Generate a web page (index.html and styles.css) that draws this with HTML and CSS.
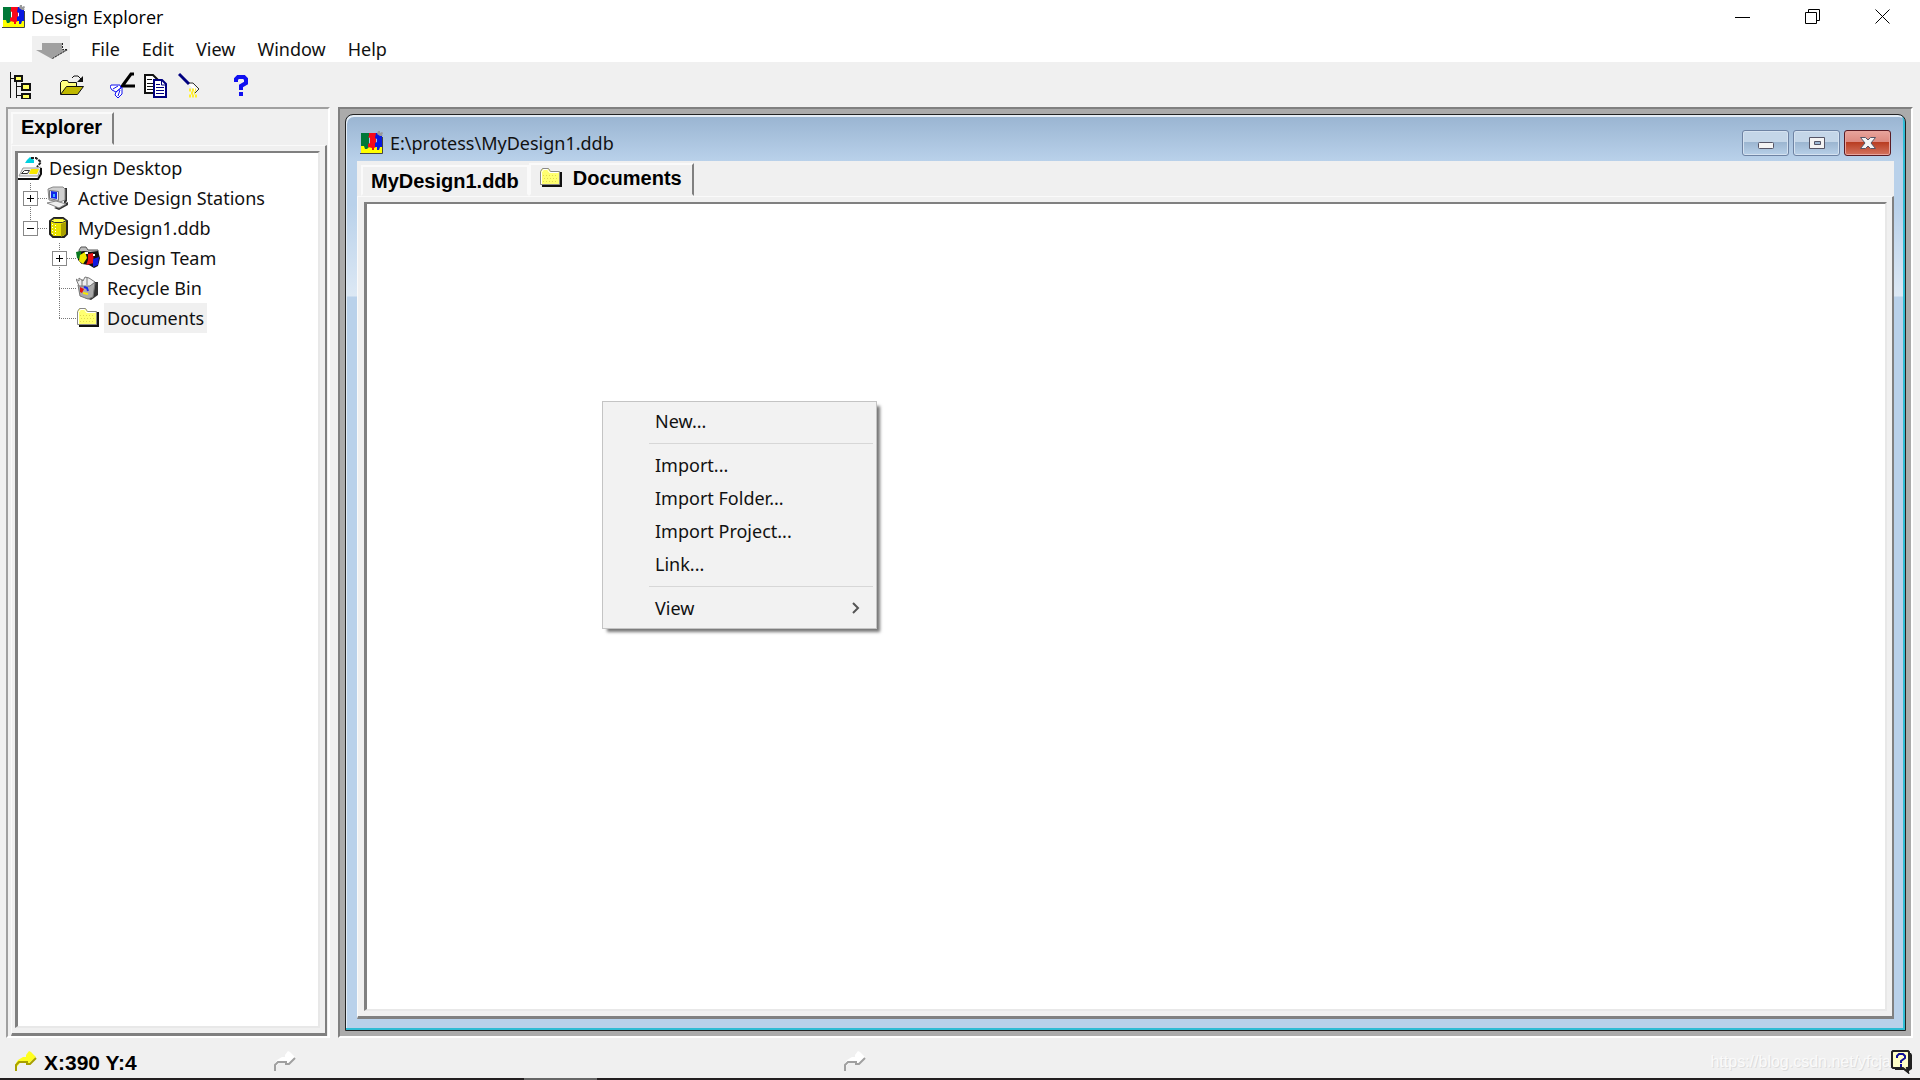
FILE: index.html
```html
<!DOCTYPE html>
<html lang="en">
<head>
    <meta charset="UTF-8">
    <meta name="viewport" content="width=device-width, initial-scale=1.0">
    <title>Design Explorer</title>
    <link rel="stylesheet" href="styles.css">
</head>
<body>
    <!-- Shared icons -->
    <svg class="sprite" aria-hidden="true">
        <symbol id="icon-app" viewBox="0 0 24 24">
            <path fill="#ffff00" d="M1 13h21v9H1z"/>
            <path fill="#007838" d="M1 2h8v14l-2 2H5l-1-3H1z"/>
            <path fill="#f80818" d="M9 2h7v14l-2 1v2h-2v-2l-4-1v-3l2-1V7L8 6l1-1z"/>
            <path fill="#0818e0" d="M16 2h6v14h-2l-1 3h-2v-3h-2v-4l2-1V8l-2-1z"/>
            <path fill="#999" d="M18 0h2v2l2-1 1 1-1 2 1 1h-3l-3-2z"/>
            <path fill="none" stroke="#444" d="M0 22.500h22.500V6"/>
        </symbol>
        <symbol id="icon-folder" viewBox="0 0 24 24">
            <path fill="#111" d="M3 6h20v15H3z"/>
            <path fill="#ffff70" stroke="#888" d="M1.500 18.500v-13l2-3h6l2 3h9v13z"/>
            <path fill="none" stroke="#fff" d="M2.500 18V6.500l2-3h4l2 3h9"/>
            <path stroke="#e0d850" stroke-dasharray="1 2" d="M4 9.500h15M5 12.500h14M4 15.500h15"/>
        </symbol>
        <symbol id="icon-arrow" viewBox="0 0 24 24">
            <path fill="currentColor" stroke="none" d="M2 13l2-3 5-3h3V5l3-4 2 1 5 5-7 6H6l-4 5z"/>
            <path fill="none" stroke-width="2" d="M2 21v-6l3-3h8v2h3l6-6"/>
        </symbol>
    </svg>

    <header class="title-bar">
        <svg class="icon"><use href="#icon-app"/></svg>
        <h1>Design Explorer</h1>
        <div class="window-controls">
            <button type="button" aria-label="Minimize">
                <svg class="control-icon" viewBox="0 0 16 16"><path d="M0 8.500h15"/></svg>
            </button>
            <button type="button" aria-label="Restore">
                <svg class="control-icon" viewBox="0 0 16 16"><path d="M.5 3.500h11v11H.5zM3.500 3.500v-3h11v11h-3"/></svg>
            </button>
            <button type="button" aria-label="Close">
                <svg class="control-icon" viewBox="0 0 16 16"><path d="M.5.5l14 14M14.500.5l-14 14"/></svg>
            </button>
        </div>
    </header>

    <nav class="menu-bar">
        <button type="button" class="menu-arrow" aria-label="Client menu">
            <svg viewBox="0 0 38 25">
                <path fill="#a0a0a0" d="M10 6h20v7h6l-16 9L4 13h6z"/>
                <path fill="none" stroke="#222" stroke-width="1" stroke-dasharray="2 1" d="M30.500 6v6.500h5l-15 9"/>
            </svg>
        </button>
        <button type="button">File</button>
        <button type="button">Edit</button>
        <button type="button">View</button>
        <button type="button">Window</button>
        <button type="button">Help</button>
    </nav>

    <div class="toolbar">
        <div class="tool-group">
            <button type="button" aria-label="Explorer panel">
                <svg viewBox="1 0 26 28">
                    <path fill="none" stroke="#111" stroke-width="1" d="M3.500 1v26M3.500 7.500h4M9.500 11v16M10 15.500h5M10 24.500h5"/>
                    <path fill="#ffff60" stroke="#111" stroke-width="2" d="M8 5h7v5H8zM15 13h8v6h-8zM15 23h8v5h-8z"/>
                </svg>
            </button>
        </div>
        <div class="tool-group">
            <button type="button" aria-label="Open">
                <svg viewBox="0 0 26 28">
                    <path fill="#ffff80" stroke="#111" d="M1.500 23V11.500l2-2h5l1 2h8V16"/>
                    <path fill="#c0b800" stroke="#111" d="M1.500 23.500l6-8h17l-6 8z"/>
                    <path fill="none" stroke="#111" stroke-width="1" d="M13 7l2-2h4l4 4"/>
                    <path fill="#111" d="M24 5v6h-6z"/>
                </svg>
            </button>
        </div>
        <div class="tool-group">
            <button type="button" aria-label="Cut">
                <svg viewBox="1 0 26 28">
                    <path stroke="#000" stroke-width="3" fill="none" d="M25 3h-3l-8 11M26 15H12"/>
                    <path fill="#fff" stroke="#1010f0" stroke-width="1" d="M2 14h9l1 3-5 4-4-2-2-3zM13 16v7l-4 4-3-3 1-3z"/>
                    <path fill="none" stroke="#1010f0" d="M4 18l5-3M9 25l2-6"/>
                </svg>
            </button>
            <button type="button" aria-label="Copy">
                <svg viewBox="2 0 26 28">
                    <path fill="#fff" stroke="#111" stroke-width="2" d="M3 4h8l5 5v13H3z"/>
                    <path stroke="#111" d="M5 8.500h5M5 12.500h7M5 15.500h7M5 18.500h7"/>
                    <path fill="#fff" stroke="#000080" stroke-width="2" d="M12 9h8l4 4v13H12z"/>
                    <path fill="none" stroke="#000080" d="M19.500 9v5H24M14 13.500h4M14 16.500h8M14 19.500h8M14 22.500h8"/>
                </svg>
            </button>
            <button type="button" aria-label="Paste">
                <svg viewBox="0 0 26 28">
                    <path stroke="#000080" stroke-width="3" d="M1 3l10 10"/>
                    <path fill="none" stroke="#333" d="M11 12h4l6 6-4 4"/>
                    <path fill="#fff" d="M11 13h3l5 5-2 2z"/>
                    <path stroke="#ffef30" stroke-width="3" stroke-dasharray="2 1" d="M11 19h7M13 22h4M11 25h8"/>
                </svg>
            </button>
        </div>
        <div class="tool-group">
            <button type="button" class="tool-help" aria-label="Help topics">
                <svg viewBox="1 0 26 28">
                    <path fill="none" stroke="#1010f0" stroke-width="4" d="M8 11V8l2-2h6l2 2v4l-5 3v4"/>
                    <path fill="#1010f0" d="M11 21h4v4h-4z"/>
                </svg>
            </button>
        </div>
    </div>

    <main class="workspace">
        <aside class="explorer">
            <div class="tabs">
                <button type="button" class="tab tab-active">Explorer</button>
            </div>
            <div class="page">
                <div class="well">
                    <ul class="tree">
                        <li>
                            <div class="tree-row">
                                <svg class="icon" viewBox="0 0 24 24">
                                    <path fill="#00d0e0" d="M7 7l2-3 3-3 4 3v3z"/>
                                    <path fill="none" stroke="#222" stroke-width="2" stroke-dasharray="3 1" d="M13 2h5l5 4-4 5"/>
                                    <path fill="#eee" stroke="#999" d="M5 12h15l3-1-3 9H1z"/>
                                    <path fill="#fff" stroke="#333" d="M3.500 17.500l3-3h5l-2 3z"/>
                                    <path fill="#f8e800" d="M11 18l2-5h8l-2 5z"/>
                                    <path fill="none" stroke="#111" stroke-width="2" d="M0 23h20l3-5v-6"/>
                                </svg>
                                <a href="#desktop">Design Desktop</a>
                            </div>
                            <ul>
                                <li>
                                    <div class="tree-row">
                                        <span class="gutter"><button type="button" class="expander" aria-label="Expand Active Design Stations"><svg viewBox="0 0 13 13"><path d="M3 6.500h7M6.500 3v7"/></svg></button></span>
                                        <svg class="icon" viewBox="1 0 24 24">
                                            <path fill="#333" d="M18 2h3v13l-3 4zM8 22l5 2 9-5v-3z"/>
                                            <path fill="#d0d0d0" stroke="#888" d="M2 3l5-2h10l2 2v11l-5 2-11-2z"/>
                                            <path fill="#e8e8ff" stroke="#777" d="M3.500 4.500l9 1v9l-9-2z"/>
                                            <path fill="#1028e8" d="M5 5l6 1v7l-6-1z"/>
                                            <path fill="#40b0ff" d="M7 8h2v3H7z"/>
                                            <path fill="#eee" stroke="#888" d="M1 17l9-2 10 3-7 4z"/>
                                        </svg>
                                        <a href="#stations">Active Design Stations</a>
                                    </div>
                                </li>
                                <li>
                                    <div class="tree-row">
                                        <span class="gutter gutter-last"><button type="button" class="expander" aria-label="Collapse MyDesign1.ddb"><svg viewBox="0 0 13 13"><path d="M3 6.500h7"/></svg></button></span>
                                        <svg class="icon" viewBox="0 0 24 24">
                                            <path fill="#e8e000" stroke="#222" stroke-width="2" d="M3 5l4-3h9l4 3v13l-3 3H6l-3-3z"/>
                                            <path fill="#ffff40" stroke="#333" d="M3.500 4.500l4-2h8l4 2-4 2h-8z"/>
                                            <path fill="#a89f00" d="M14 8l5-2v12l-5 3z"/>
                                            <path stroke="#fff" stroke-dasharray="1 2" d="M5.500 8v10M8.500 9v10"/>
                                        </svg>
                                        <a href="#mydesign">MyDesign1.ddb</a>
                                    </div>
                                    <ul>
                                        <li>
                                            <div class="tree-row">
                                                <span class="gutter"><button type="button" class="expander" aria-label="Expand Design Team"><svg viewBox="0 0 13 13"><path d="M3 6.500h7M6.500 3v7"/></svg></button></span>
                                                <svg class="icon" viewBox="1 0 24 24">
                                                    <path fill="#bbb" stroke="#555" d="M4 4l2-3h5l2 3h10v13H6z"/>
                                                    <path fill="#111" d="M2 6l7-1 6 1 8-1 2 7-2 8-4 2-5-3-7-1-4-4z"/>
                                                    <path fill="#087820" d="M1 6l5-1v9l-4-2z"/>
                                                    <path fill="#f0e800" d="M5 9l5-3 2 6-4 6-4-3z"/>
                                                    <path fill="#e81010" d="M13 8l5-1 1 10-8 2 2-5z"/>
                                                    <path fill="#1018e0" d="M18 13l6-2-1 8-5 2z"/>
                                                    <path fill="#fff" d="M10 6h3v2h-3zM18 8h2v2h-2z"/>
                                                </svg>
                                                <a href="#team">Design Team</a>
                                            </div>
                                        </li>
                                        <li>
                                            <div class="tree-row">
                                                <span class="gutter"></span>
                                                <svg class="icon" viewBox="1 0 24 24">
                                                    <path fill="#333" d="M19 6h4v13l-7 5-6-2z"/>
                                                    <path fill="#aaa" stroke="#777" d="M3 9l7 1 10-3-2 14-5 2-8-3z"/>
                                                    <path fill="#eee" stroke="#777" d="M1 3l3 2V2l4 3 2-4 4 1 6 4-5 4H4z"/>
                                                    <path fill="none" stroke="#777" d="M7 3v7M12 2v7"/>
                                                    <path fill="#e81010" d="M5 11l4 2-2 4-2-1z"/>
                                                    <path fill="none" stroke="#1828f0" stroke-width="2" d="M9 11l3 1 1 3"/>
                                                    <path fill="#f8e800" d="M8 16l5 1v2l-5-1z"/>
                                                </svg>
                                                <a href="#recycle">Recycle Bin</a>
                                            </div>
                                        </li>
                                        <li>
                                            <div class="tree-row">
                                                <span class="gutter gutter-last"></span>
                                                <svg class="icon"><use href="#icon-folder"/></svg>
                                                <a href="#documents" class="selected">Documents</a>
                                            </div>
                                        </li>
                                    </ul>
                                </li>
                            </ul>
                        </li>
                    </ul>
                </div>
            </div>
        </aside>

        <section class="mdi-area">
            <div class="mdi-window">
                <div class="mdi-title">
                    <svg class="icon"><use href="#icon-app"/></svg>
                    <h2>E:\protess\MyDesign1.ddb</h2>
                    <div class="mdi-controls">
                        <button type="button" aria-label="Minimize document">
                            <svg viewBox="0 0 18 16"><rect x="1.500" y="7.500" width="15" height="6" rx="1" fill="#f4f4f4" stroke="#556"/></svg>
                        </button>
                        <button type="button" aria-label="Maximize document">
                            <svg viewBox="0 0 18 16"><path fill="#f4f4f4" fill-rule="evenodd" stroke="#556" d="M1.500 2.500h15v11h-15zM6.500 6.500v3h6v-3z"/></svg>
                        </button>
                        <button type="button" class="mdi-close" aria-label="Close document">
                            <svg viewBox="0 0 18 16"><path fill="#f4f4f4" stroke="#556" d="M1.500 2.500h5L9 5l2.500-2.500h5L12 8l4.500 5.500h-5L9 11l-2.500 2.500h-5L6 8z"/></svg>
                        </button>
                    </div>
                </div>
                <div class="mdi-client">
                    <div class="tabs">
                        <button type="button" class="tab">MyDesign1.ddb</button>
                        <button type="button" class="tab tab-active"><svg class="icon"><use href="#icon-folder"/></svg>Documents</button>
                    </div>
                    <div class="page">
                        <div class="well document">
                            <div class="context-menu" role="menu">
                                <button type="button" role="menuitem">New...</button>
                                <hr>
                                <button type="button" role="menuitem">Import...</button>
                                <button type="button" role="menuitem">Import Folder...</button>
                                <button type="button" role="menuitem">Import Project...</button>
                                <button type="button" role="menuitem">Link...</button>
                                <hr>
                                <button type="button" role="menuitem">View
                                    <svg viewBox="0 0 8 12"><path d="M1 1l5 5-5 5"/></svg>
                                </button>
                            </div>
                        </div>
                    </div>
                </div>
            </div>
        </section>
    </main>

    <footer class="status-bar">
        <div class="status-cell status-position">
            <svg class="icon"><use href="#icon-arrow"/></svg>
            <span>X:390 Y:4</span>
        </div>
        <div class="status-cell status-hint">
            <svg class="icon"><use href="#icon-arrow"/></svg>
        </div>
        <div class="status-cell status-command">
            <svg class="icon"><use href="#icon-arrow"/></svg>
        </div>
        <span class="watermark">https://blog.csdn.net/yfcja</span>
        <button type="button" class="status-help" aria-label="Help advisor">
            <svg viewBox="0 0 22 24">
                <path fill="#222" d="M3 3h17l1 2v14l-3 2v3l-5-4H4z"/>
                <path fill="#ffffc8" stroke="#222" stroke-width="2" d="M2 1h15l1 1v15l-1 1h-1l1 4-5-4H2l-1-1V2z"/>
                <path fill="none" stroke="#101098" stroke-width="2" d="M6 8V6l2-2h4l2 2v2l-4 3v2"/>
                <path fill="#101098" d="M9 14h2v3H9z"/>
            </svg>
        </button>
    </footer>
    <div class="taskbar-edge"></div>
</body>
</html>
```

FILE: styles.css
```css
* {
    margin: 0;
    padding: 0;
    box-sizing: border-box;
}
body {
    display: flex;
    flex-direction: column;
    min-height: 100vh;
    background: #f0f0f0;
    color: #111;
    font-family: "Noto Sans", "Open Sans", sans-serif;
    font-size: 18px;
    line-height: 24px;
}
button {
    border: none;
    background: none;
    color: inherit;
    font: inherit;
}
a {
    color: inherit;
    text-decoration: none;
}
svg {
    display: block;
    flex: none;
}
.sprite {
    display: none;
}
.icon {
    width: 24px;
    height: 24px;
}

/* Title bar and menu */
.title-bar {
    display: flex;
    align-items: center;
    height: 36px;
    padding: 0 2px 2px;
    gap: 5px;
    background: #fff;
}
.title-bar h1 {
    color: #000;
    font-family: "Open Sans", sans-serif;
    font-size: 18px;
    font-weight: 400;
}
.window-controls {
    display: flex;
    margin-left: auto;
}
.window-controls button {
    display: grid;
    place-items: center;
    width: 70px;
    height: 34px;
}
.control-icon {
    width: 16px;
    height: 16px;
    fill: none;
    stroke: #000;
}
.menu-bar {
    display: flex;
    height: 26px;
    padding-left: 32px;
    background: #fff;
}
.menu-bar button {
    padding: 0 11px;
}
.menu-bar .menu-arrow {
    width: 38px;
    margin-right: 10px;
    padding: 0;
    background: #f0f0f0;
}

/* Toolbar */
.toolbar {
    display: flex;
    align-items: center;
    gap: 17px;
    height: 45px;
    padding-left: 4px;
}
.tool-group {
    display: flex;
}
.tool-group button {
    display: grid;
    place-items: center;
    width: 34px;
    height: 34px;
}
.tool-group svg {
    width: 26px;
    height: 28px;
}

/* Panels */
.workspace {
    display: flex;
    flex: 1;
    gap: 8px;
    padding: 0 7px 0 6px;
}
.explorer {
    display: flex;
    flex-direction: column;
    width: 324px;
    padding: 3px 1px 0 3px;
    border: 2px solid;
    border-color: #a0a0a0 #fff #fff #a0a0a0;
}
.tabs {
    display: flex;
    align-items: flex-end;
}
.tab {
    display: flex;
    align-items: center;
    gap: 10px;
    height: 31px;
    padding: 0 8px;
    border: 2px solid;
    border-color: #fafafa #fafafa transparent #fafafa;
    color: #000;
    font-family: "Liberation Sans", Arial, sans-serif;
    font-size: 20px;
    font-weight: 700;
}
.tab-active {
    height: 33px;
    padding: 0 10px 3px 8px;
    border-right-color: #808080;
}
.page {
    display: flex;
    flex: 1;
    padding: 5px 5px 5px 3px;
    border: solid;
    border-width: 1px 2px 3px 1px;
    border-color: #fafafa #808080 #808080 #fafafa;
}
.well {
    flex: 1;
    border: solid;
    border-width: 2px 2px 2px 3px;
    border-color: #808080 #e8e8e8 #e8e8e8 #808080;
    background: #fff;
}

/* Tree */
.tree ul,
.tree {
    list-style: none;
}
.tree ul ul {
    margin-left: 29px;
}
.tree-row {
    display: flex;
    align-items: center;
    height: 30px;
}
.tree-row a {
    margin-left: 4px;
    padding: 3px;
}
.tree-row .selected {
    background: #f0f0f0;
}
.gutter {
    display: flex;
    align-items: center;
    width: 29px;
    height: 30px;
    padding-left: 6px;
    background:
        repeating-linear-gradient(#777 0 1px, transparent 1px 2px) 12px 0 / 1px 100% no-repeat,
        repeating-linear-gradient(90deg, #777 0 1px, transparent 1px 2px) 12px 15px / 17px 1px no-repeat;
}
.gutter-last {
    background-size: 1px 15px, 17px 1px;
}
.expander {
    width: 13px;
    height: 13px;
    background: #fff;
    outline: 1px solid #888;
}
.expander path {
    stroke: #000;
    stroke-width: 1;
}

/* Document window */
.mdi-area {
    display: flex;
    flex: 1;
    padding: 5px;
    border: 2px solid;
    border-color: #808080 #fff #fff #808080;
    background: #ababab;
}
.mdi-window {
    display: flex;
    flex: 1;
    flex-direction: column;
    padding: 0 11px 11px;
    border: 1px solid #222;
    border-radius: 8px 8px 0 0;
    background:
        linear-gradient(#99b4d1, #b9d1ea 46px, #b9d1ea 90px, #dce8f4 181px, #b9d1ea 182px);
    box-shadow: inset -2px -2px #30bcd4, inset 1px 2px #e4edf6;
}
.mdi-title {
    display: flex;
    align-items: center;
    gap: 6px;
    height: 46px;
    padding: 10px 3px 0;
}
.mdi-title h2 {
    font-size: 18px;
    font-weight: 400;
}
.mdi-controls {
    display: flex;
    gap: 4px;
    margin-left: auto;
}
.mdi-controls button {
    display: grid;
    place-items: center;
    width: 47px;
    height: 26px;
    border: 1px solid #6e83a3;
    border-radius: 3px;
    background: linear-gradient(#c4d6e8 0 45%, #9bb5d0 46%, #b8d0e8);
    box-shadow: inset 0 0 0 1px #d5e2f0;
}
.mdi-controls .mdi-close {
    border-color: #5a1c24;
    background: linear-gradient(#e8a49c, #dd8a80 45%, #b83c20 46%, #d47460);
    box-shadow: inset 0 0 0 1px #e8a49c;
}
.mdi-controls svg {
    width: 18px;
    height: 16px;
}
.mdi-client {
    display: flex;
    flex: 1;
    flex-direction: column;
    background: #f0f0f0;
}
.mdi-client .tabs {
    padding: 2px 4px 0;
}
.mdi-client .page {
    padding-left: 6px;
}
.document {
    position: relative;
}

/* Context menu */
.context-menu {
    position: absolute;
    top: 197px;
    left: 235px;
    width: 275px;
    padding: 3px;
    border: 1px solid #c4c4c4;
    background: #f2f2f2;
    box-shadow: 4px 4px 3px -1px #777;
}
.context-menu button {
    display: flex;
    align-items: center;
    justify-content: space-between;
    width: 100%;
    height: 33px;
    padding: 0 13px 2px 49px;
}
.context-menu hr {
    height: 1px;
    margin: 5px 0 5px 43px;
    border: none;
    background: #d7d7d7;
}
.context-menu svg {
    width: 8px;
    height: 12px;
    fill: none;
    stroke: #555;
    stroke-width: 2;
}

/* Status bar */
.status-bar {
    display: flex;
    align-items: center;
    height: 40px;
    padding: 8px 7px 0 14px;
}
.status-cell {
    display: flex;
    align-items: center;
    gap: 6px;
    color: #fff;
}
.status-cell .icon {
    stroke: #a0a0a0;
}
.status-cell span {
    padding-top: 2px;
    color: #000;
    font-family: "Liberation Sans", Arial, sans-serif;
    font-size: 21px;
    font-weight: 700;
}
.status-position {
    width: 259px;
}
.status-position .icon {
    color: #ffff20;
    stroke: #a8a000;
}
.status-hint {
    width: 570px;
}
.status-command {
    flex: 1;
}
.watermark {
    color: #fafafa;
    font-family: "Liberation Sans", Arial, sans-serif;
    font-size: 16px;
    text-shadow: 1px 1px #ddd;
}
.status-help {
    width: 22px;
    height: 24px;
}
.taskbar-edge {
    height: 2px;
    background: linear-gradient(90deg, #231f20 524px, #666 524px 597px, #231f20 597px);
}
```
